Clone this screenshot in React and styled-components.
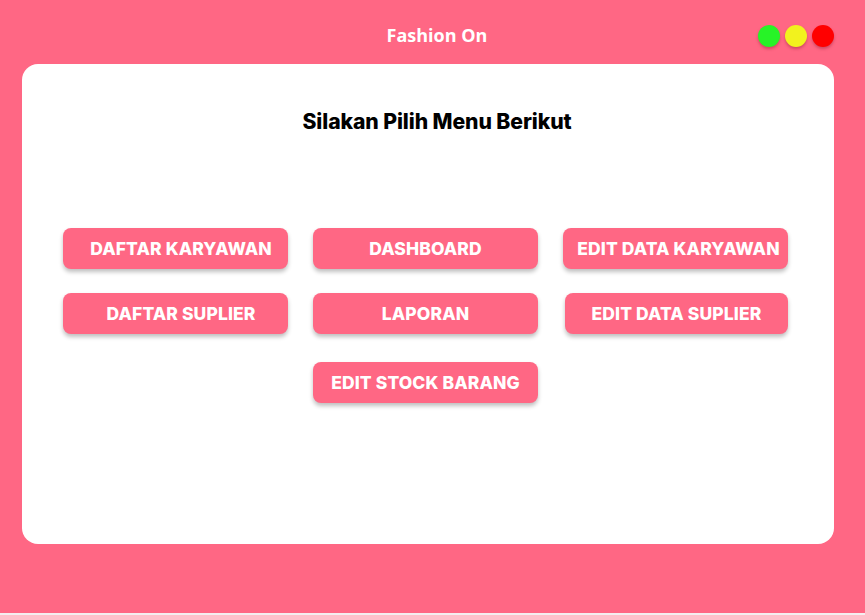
import React from 'react'
import styled, { createGlobalStyle } from 'styled-components'

const GlobalStyle = createGlobalStyle`
  html, body {
    margin: 0;
    padding: 0;
    background: #f4eef0;
  }
  * { box-sizing: border-box; }
`

const Frame = styled.div`
  width: 865px;
  height: 613px;
  background: #ff6784;
  display: flex;
  flex-direction: column;
`

const Header = styled.header`
  height: 64px;
  display: grid;
  grid-template-columns: 1fr auto 1fr;
  align-items: center;
  padding: 0 31px 0 40px;
`

const AppTitle = styled.h1`
  grid-column: 2;
  margin: 6px 0 0;
  font-family: "Open Sans", sans-serif;
  font-weight: 700;
  font-size: 18px;
  color: #fff;
`

const Dots = styled.div`
  grid-column: 3;
  justify-self: end;
  display: flex;
  gap: 5px;
  margin-top: 8px;
`

const Dot = styled.span`
  width: 22px;
  height: 22px;
  border-radius: 50%;
  background: ${p => p.color};
  box-shadow: 0 2px 3px rgba(120, 20, 40, 0.35);
`

const Card = styled.main`
  margin: 0 31px 0 22px;
  height: 480px;
  background: #fff;
  border-radius: 16px;
  padding: 44px 0 0 41px;
`

const Heading = styled.h2`
  margin: 0 0 94px;
  padding-right: 23px;
  text-align: center;
  font-family: Inter, sans-serif;
  font-weight: 800;
  font-size: 21.2px;
  letter-spacing: -0.1px;
  color: #000;
`

const Grid = styled.div`
  display: grid;
  grid-template-columns: repeat(3, 225px);
  grid-template-rows: 41px 41px 45px;
  column-gap: 25px;
  row-gap: 24px;
`

const MenuButton = styled.button`
  grid-column: ${p => p.col};
  align-self: end;
  height: 41px;
  margin-left: ${p => p.nudge || 0}px;
  border: none;
  border-radius: 8px;
  background: #ff6784;
  color: #fff;
  font-family: Inter, sans-serif;
  font-weight: 800;
  font-size: 17.5px;
  letter-spacing: 0.1px;
  text-transform: uppercase;
  white-space: nowrap;
  padding: 0 0 0 ${p => p.pad || 0}px;
  box-shadow: 0 3px 4px rgba(0, 0, 0, 0.25);
  cursor: pointer;
`

const menus = [
  { label: 'Daftar Karyawan', col: 1, pad: 11 },
  { label: 'Dashboard', col: 2 },
  { label: 'Edit Data Karyawan', col: 3, pad: 6 },
  { label: 'Daftar Suplier', col: 1, pad: 11 },
  { label: 'Laporan', col: 2 },
  { label: 'Edit Data Suplier', col: 3, nudge: 2 },
  { label: 'Edit Stock Barang', col: 2 },
]

export default function App() {
  return (
    <>
      <GlobalStyle />
      <Frame>
        <Header>
          <AppTitle>Fashion On</AppTitle>
          <Dots>
            <Dot color="#27f327" />
            <Dot color="#f2f21e" />
            <Dot color="#ff0000" />
          </Dots>
        </Header>
        <Card>
          <Heading>Silakan Pilih Menu Berikut</Heading>
          <Grid>
            {menus.map(m => (
              <MenuButton key={m.label} col={m.col} pad={m.pad} nudge={m.nudge}>
                {m.label}
              </MenuButton>
            ))}
          </Grid>
        </Card>
      </Frame>
    </>
  )
}
